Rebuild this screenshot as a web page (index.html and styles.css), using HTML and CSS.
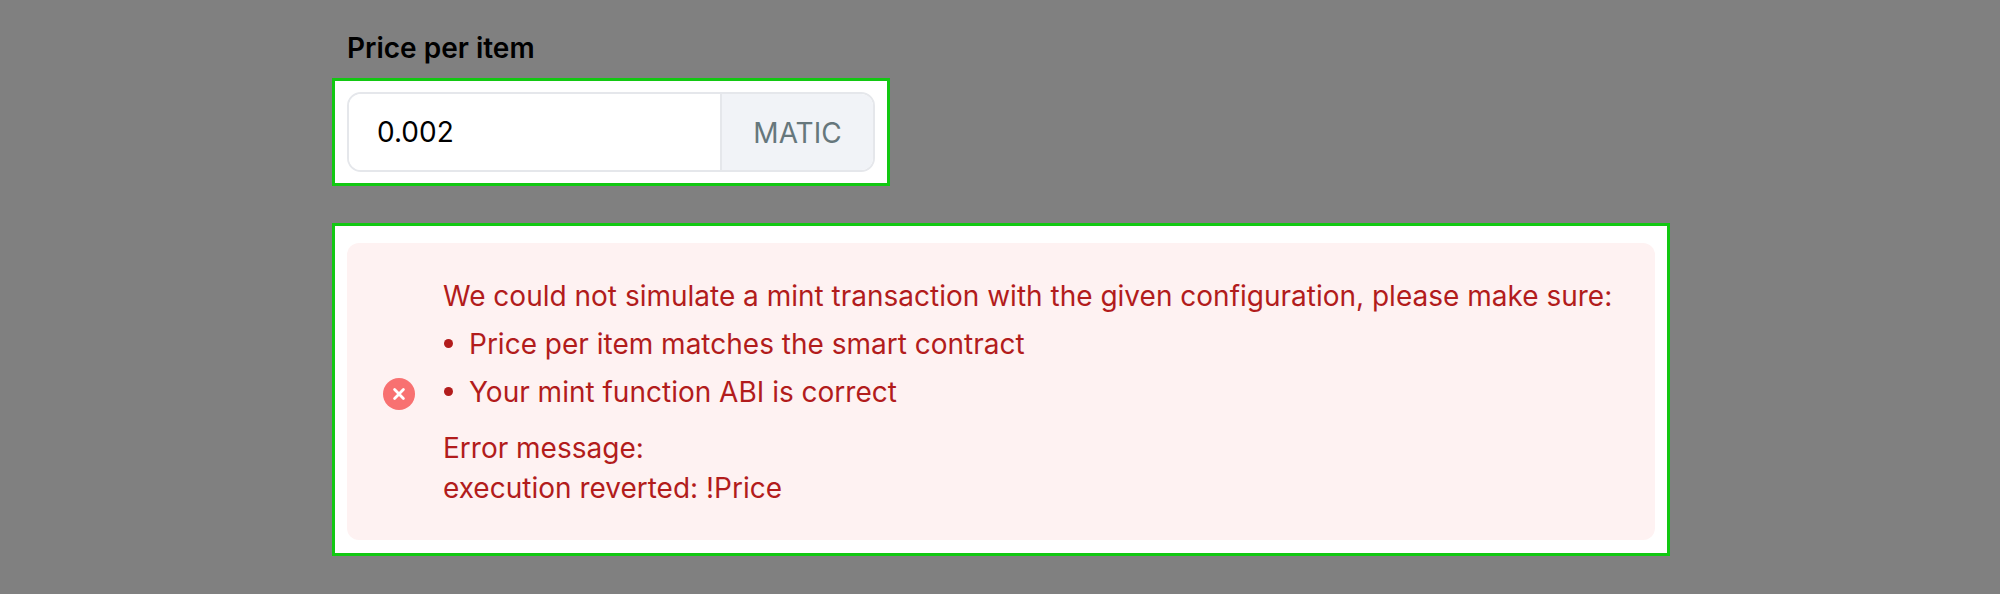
FILE: index.html
```html
<!DOCTYPE html>
<html lang="en">
<head>
<meta charset="utf-8">
<title>Price per item</title>
<link rel="stylesheet" href="styles.css">
</head>
<body>
<main class="page">
  <label class="field-label" for="price">Price per item</label>
  <div class="highlight highlight-input">
    <div class="input-group">
      <input id="price" class="input" type="text" value="0.002">
      <div class="addon">MATIC</div>
    </div>
  </div>
  <div class="highlight highlight-alert">
    <div class="alert">
      <svg class="alert-icon" viewBox="0 0 32 32" aria-hidden="true">
        <circle cx="16" cy="16" r="16" fill="#f87171"/>
        <path d="M11.6 11.6l8.8 8.8M20.4 11.6l-8.8 8.8" stroke="#fff" stroke-width="2.8" stroke-linecap="round" fill="none"/>
      </svg>
      <div class="alert-body">
        <p class="alert-intro">We could not simulate a mint transaction with the given configuration, please make sure:</p>
        <ul class="alert-list">
          <li>Price per item matches the smart contract</li>
          <li>Your mint function ABI is correct</li>
        </ul>
        <p class="alert-error">Error message:<br>execution reverted: !Price</p>
      </div>
    </div>
  </div>
</main>
</body>
</html>
```
FILE: styles.css
```css
* { box-sizing: border-box; }
html, body { margin: 0; height: 100%; }
body {
  background: #808080;
  font-family: Inter, "Liberation Sans", sans-serif;
  font-optical-sizing: none;
  overflow: hidden;
}
.page {
  display: flex;
  flex-direction: column;
  align-items: flex-start;
  padding: 28px 0 0 332px;
}
.field-label {
  margin-left: 15px;
  margin-bottom: 10px;
  font-size: 28px;
  line-height: 40px;
  font-weight: 600;
  color: #000;
}
.highlight {
  background: #fff;
  border: 3px solid #12c812;
  padding: 11px 12px;
}
.highlight-input { width: 558px; height: 108px; }
.highlight-alert {
  width: 1338px;
  height: 333px;
  margin-top: 37px;
  padding: 17px 12px 13px;
}
.input-group {
  display: flex;
  height: 80px;
  border: 2px solid #e5e7eb;
  border-radius: 14px;
  overflow: hidden;
}
.input {
  flex: 1;
  min-width: 0;
  border: 0;
  outline: 0;
  padding: 0 0 0 28px;
  font: 400 28px/40px Inter, "Liberation Sans", sans-serif;
  color: #000;
  background: #fff;
}
.addon {
  width: 153px;
  display: flex;
  align-items: center;
  justify-content: center;
  background: #f1f3f7;
  border-left: 2px solid #e5e7eb;
  color: #66777c;
  font-size: 28px;
  padding-top: 2px;
}
.alert {
  display: flex;
  align-items: center;
  gap: 28px;
  height: 297px;
  padding: 0 32px 0 36px;
  background: #fef2f2;
  border-radius: 12px;
  color: #b21c1c;
  font-size: 28px;
  line-height: 40px;
}
.alert-icon { width: 32px; height: 32px; flex: none; margin-top: 4px; }
.alert p { margin: 0; }
.alert-list {
  list-style: none;
  margin: 8px 0 16px;
  padding: 0;
}
.alert-list li {
  position: relative;
  padding-left: 26px;
  margin-bottom: 8px;
}
.alert-list li:last-child { margin-bottom: 0; }
.alert-list li::before {
  content: "";
  position: absolute;
  left: 1px;
  top: 15px;
  width: 9px;
  height: 9px;
  border-radius: 50%;
  background: #b21c1c;
}
```
